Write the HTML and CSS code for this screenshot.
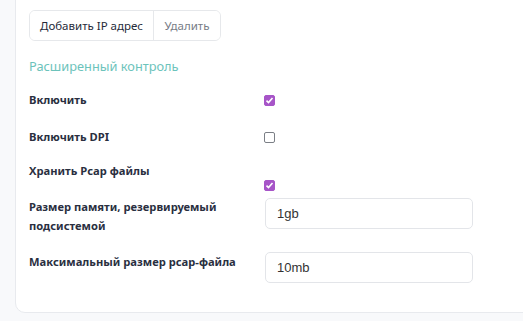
FILE: index.html
```html
<!DOCTYPE html>
<html lang="ru">
<head>
<meta charset="UTF-8" />
<title>Расширенный контроль</title>
<link rel="stylesheet" href="styles.css">
</head>
<body>

<div class="card">
  <div class="btn-group">
    <button class="btn btn-add">Добавить IP адрес</button>
    <button class="btn btn-del">Удалить</button>
  </div>

  <h3 class="section-title">Расширенный контроль</h3>

  <div class="row row-center">
    <label class="lbl">Включить</label>
    <div class="ctrl"><input type="checkbox" class="chk" checked></div>
  </div>

  <div class="row row-center">
    <label class="lbl">Включить DPI</label>
    <div class="ctrl"><input type="checkbox" class="chk"></div>
  </div>

  <div class="row row-pcap">
    <label class="lbl">Хранить Pcap файлы</label>
    <div class="ctrl"><input type="checkbox" class="chk" checked></div>
  </div>

  <div class="row row-input">
    <label class="lbl lbl-two">Размер памяти, резервируемый подсистемой</label>
    <div class="ctrl"><input type="text" class="inp" value="1gb"></div>
  </div>

  <div class="row row-input row-last">
    <label class="lbl">Максимальный размер pcap-файла</label>
    <div class="ctrl"><input type="text" class="inp" value="10mb"></div>
  </div>
</div>

</body>
</html>
```

FILE: styles.css
```css
body {
  margin: 0;
  background: #f8f9fb;
  font-family: "Noto Sans", sans-serif;
  overflow: hidden;
}
.card {
  margin: -20px -20px 0 15px;
  background: #fff;
  border: 1px solid #e8eaee;
  border-radius: 10px;
  padding: 29px 13px 29px 13px;
}
.btn-group {
  display: flex;
  width: max-content;
  border: 1px solid #e6e8eb;
  border-radius: 6px;
  height: 31px;
  box-sizing: border-box;
  overflow: hidden;
}
.btn {
  border: 0;
  background: #fff;
  font-family: "Noto Sans", sans-serif;
  font-size: 11.5px;
  padding: 0;
  white-space: nowrap;
  color: #262b3a;
}
.btn-add { width: 124px; border-right: 1px solid #e6e8eb; }
.btn-del { width: 66px; color: #777c86; }
.section-title {
  margin: 15px 0 13px;
  font-size: 12.8px;
  line-height: 20px;
  font-weight: 400;
  color: #6cc3bb;
}
.row {
  display: flex;
}
.lbl {
  width: 235px;
  font-size: 11.2px;
  font-weight: 700;
  color: #2a2f3f;
  line-height: 20px;
}
.row-center {
  align-items: center;
  height: 22px;
  margin-bottom: 15px;
}
.row-pcap {
  height: 30px;
  margin-top: -2px;
}
.row-pcap .ctrl { padding-top: 13px; }
.row-input { margin-top: 6px; }
.row-input .ctrl { padding-top: 1px; }
.lbl-two { line-height: 19px; }
.row-last { margin-top: 16px; }
.row-last .lbl { padding-top: 1px; }
.chk {
  appearance: none;
  width: 11px;
  height: 11px;
  margin: 0;
  border: 1px solid #7b7f86;
  border-radius: 2px;
  box-sizing: border-box;
  background: #fff;
}
.chk:checked {
  border-color: #a755c8;
  background: #a755c8 url("data:image/svg+xml,%3Csvg xmlns='http://www.w3.org/2000/svg' viewBox='0 0 11 11'%3E%3Cpath d='M2.5 5.6l2 2 4-4.6' fill='none' stroke='%23fff' stroke-width='1.6'/%3E%3C/svg%3E") no-repeat center/11px;
}
.inp {
  width: 208px;
  height: 31px;
  box-sizing: border-box;
  border: 1px solid #e3e5e9;
  border-radius: 5px;
  padding: 0 11px;
  font-family: "Liberation Sans", sans-serif;
  font-size: 13px;
  color: #333;
  margin-left: 1px;
}
```
